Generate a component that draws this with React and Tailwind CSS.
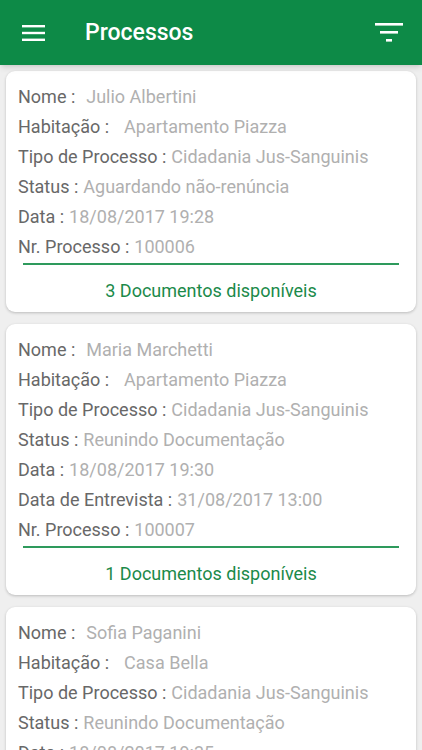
import React from "react";

const processos = [
	{
		id: 1,
		rows: [
			["Nome :", "Julio Albertini", "ml-[11px]"],
			["Habitação :", "Apartamento Piazza", "ml-[15px]"],
			["Tipo de Processo :", "Cidadania Jus-Sanguinis", "ml-[5px]"],
			["Status :", "Aguardando não-renúncia", "ml-[5px]"],
			["Data :", "18/08/2017 19:28", "ml-[5px]"],
			["Nr. Processo :", "100006", "ml-[5px]"],
		],
		docs: 3,
	},
	{
		id: 2,
		rows: [
			["Nome :", "Maria Marchetti", "ml-[11px]"],
			["Habitação :", "Apartamento Piazza", "ml-[15px]"],
			["Tipo de Processo :", "Cidadania Jus-Sanguinis", "ml-[5px]"],
			["Status :", "Reunindo Documentação", "ml-[5px]"],
			["Data :", "18/08/2017 19:30", "ml-[5px]"],
			["Data de Entrevista :", "31/08/2017 13:00", "ml-[5px]"],
			["Nr. Processo :", "100007", "ml-[5px]"],
		],
		docs: 1,
	},
	{
		id: 3,
		rows: [
			["Nome :", "Sofia Paganini", "ml-[11px]"],
			["Habitação :", "Casa Bella", "ml-[15px]"],
			["Tipo de Processo :", "Cidadania Jus-Sanguinis", "ml-[5px]"],
			["Status :", "Reunindo Documentação", "ml-[5px]"],
			["Data :", "18/08/2017 19:35", "ml-[5px]"],
			["Nr. Processo :", "100008", "ml-[5px]"],
		],
		docs: 2,
	},
];

const Header = () => (
	<div className="shrink-0 flex items-center h-[65px] bg-[#0d8a47] shadow-md relative z-10">
		{/* menu */}
		<div className="w-[85px] pl-[22px] pt-[1px] flex">
			<svg width="24" height="18" viewBox="0 0 24 18">
				<rect x="0" y="1" width="23" height="2.4" fill="#fff" />
				<rect x="0" y="7.8" width="23" height="2.4" fill="#fff" />
				<rect x="0" y="14.6" width="23" height="2.4" fill="#fff" />
			</svg>
		</div>
		<h1 className="flex-1 text-white text-[23px] font-medium pt-[2px]">
			Processos
		</h1>
		{/* filter */}
		<div className="pr-[19px] flex">
			<svg width="28" height="20" viewBox="0 0 28 20">
				<rect x="0" y="0" width="28" height="2.6" fill="#fff" />
				<rect x="5" y="8" width="18" height="2.6" fill="#fff" />
				<rect x="11" y="16" width="6" height="2.6" fill="#fff" />
			</svg>
		</div>
	</div>
);

const ProcessoCard = ({ processo }) => (
	<div className="shrink-0 bg-white rounded-[9px] shadow-[0_1px_3px_rgba(0,0,0,0.22)] overflow-hidden">
		<div className="pt-[10px] px-[12px]">
			{processo.rows.map(([label, value, gap], index) => (
				<div
					key={index}
					className="h-[30px] flex items-center whitespace-nowrap text-[18px]"
				>
					<span className="text-[#686868]">{label}</span>
					<span className={`text-[#b0b0b0] ${gap}`}>{value}</span>
				</div>
			))}
		</div>
		<div className="mx-[17px] mt-[2px] h-[2px] bg-[#2e9a5c]"></div>
		<div className="h-[47px] flex items-center justify-center text-[18px] text-[#1b8a4a] pt-[4px]">
			{processo.docs} Documentos disponíveis
		</div>
	</div>
);

const App = () => {
	return (
		<div
			className="w-[422px] h-[750px] overflow-hidden bg-[#efefef] flex flex-col"
			style={{ fontFamily: "Roboto, 'Noto Sans', sans-serif" }}
		>
			<Header />
			<div className="flex flex-col gap-[12px] px-[6px] pt-[6px]">
				{processos.map((processo) => (
					<ProcessoCard key={processo.id} processo={processo} />
				))}
			</div>
		</div>
	);
};

export default App;
